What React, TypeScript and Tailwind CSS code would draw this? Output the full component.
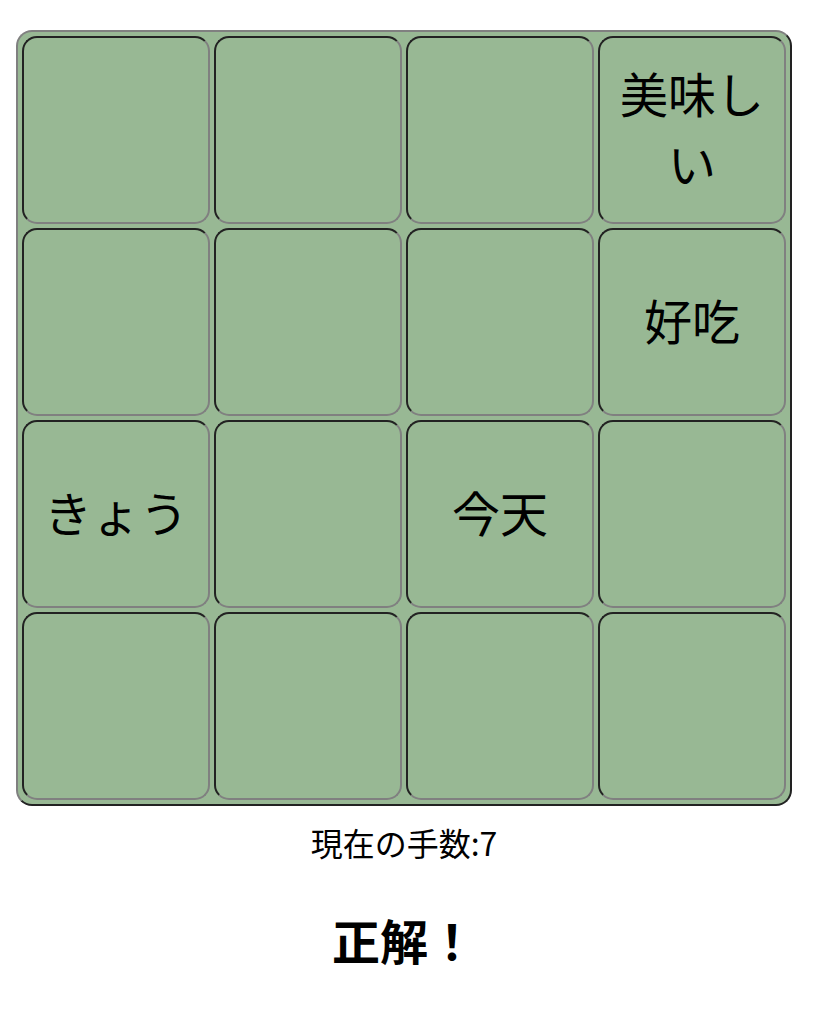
const cells: string[] = [
  "", "", "", "美味しい",
  "", "", "", "好吃",
  "きょう", "", "今天", "",
  "", "", "", "",
];

export default function App() {
  return (
    <div
      className="flex min-h-screen w-[808px] flex-col items-center bg-white pt-[30px] text-black"
      style={{ fontFamily: '"Noto Sans CJK JP", "Noto Sans", sans-serif' }}
    >
      <div className="grid w-[776px] grid-cols-4 gap-1 rounded-[16px] border-2 border-t-[#808080] border-l-[#808080] border-r-[#222] border-b-[#222] bg-[#98b894] p-1">
        {cells.map((c, i) => (
          <div
            key={i}
            className="flex h-[188px] w-[188px] items-center justify-center rounded-[15px] border-2 border-t-[#222] border-l-[#222] border-r-[#808080] border-b-[#808080] pb-[6px] text-center text-[48px] leading-[70px]"
          >
            {c}
          </div>
        ))}
      </div>
      <p className="mt-[13px] text-[32px] leading-[46px]">現在の手数:7</p>
      <p className="mt-[39px] text-[48px] font-bold leading-[70px]">正解！</p>
    </div>
  );
}
